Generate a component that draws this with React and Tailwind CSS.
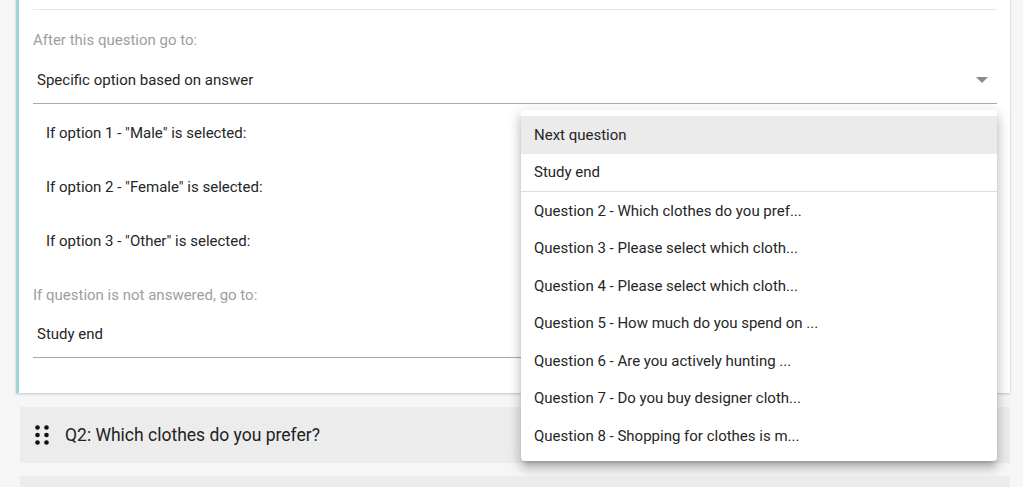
import React from "react";

const menuItems = [
  "Question 2 - Which clothes do you pref...",
  "Question 3 - Please select which cloth...",
  "Question 4 - Please select which cloth...",
  "Question 5 - How much do you spend on ...",
  "Question 6 - Are you actively hunting ...",
  "Question 7 - Do you buy designer cloth...",
  "Question 8 - Shopping for clothes is m...",
];

function DragDots() {
  return (
    <svg width="14" height="20" viewBox="0 0 14 20" className="shrink-0">
      {[2.5, 11.5].map((cx) =>
        [2.5, 10, 17.5].map((cy) => (
          <circle key={cx + "-" + cy} cx={cx} cy={cy} r="2.3" fill="#111" />
        ))
      )}
    </svg>
  );
}

export default function App() {
  return (
    <div className="relative w-[1023px] h-[487px] overflow-hidden bg-[#f6f6f6] font-['Roboto','Liberation_Sans',sans-serif] text-[#262626]">
      {/* Card */}
      <div className="ml-4 -mt-[10px] w-[994px] bg-white border-l-[3px] border-[#9fd5d5] shadow-[0_1px_3px_rgba(0,0,0,0.12),0_1px_2px_rgba(0,0,0,0.10)] pl-[14px] pr-[13px] pt-[19px] pb-[35px]">
        <div className="h-px bg-[#e6e6e6]" />
        <div className="mt-[22px] text-[15px] leading-4 text-[#9e9e9e]">After this question go to:</div>
        <div className="relative h-[56px] border-b border-[#ababab] flex items-end pb-[15px] pl-[4px]">
          <span className="text-[15px] leading-4">Specific option based on answer</span>
          <svg width="12" height="6" viewBox="0 0 12 6" className="absolute right-[9px] top-[29px]">
            <path d="M0 0 L12 0 L6 6 Z" fill="#8a8a8a" />
          </svg>
        </div>
        <div className="mt-[2px] pl-[13px]">
          <div className="h-[54px] flex items-center text-[15px]">If option 1 - "Male" is selected:</div>
          <div className="h-[54px] flex items-center text-[15px]">If option 2 - "Female" is selected:</div>
          <div className="h-[54px] flex items-center text-[15px]">If option 3 - "Other" is selected:</div>
        </div>
        <div className="mt-[19px] text-[15px] leading-4 text-[#9e9e9e]">If question is not answered, go to:</div>
        <div className="h-[55px] border-b border-[#ababab] flex items-end pb-[15px] pl-[4px]">
          <span className="text-[15px] leading-4">Study end</span>
        </div>
      </div>

      {/* Q2 bar */}
      <div className="relative ml-[20px] mt-[14px] w-[990px] h-[56px] bg-[#ececec] flex items-center pl-[15px] gap-[16px]">
        <DragDots />
        <span className="text-[17.5px] text-[#222]">Q2: Which clothes do you prefer?</span>
        <svg width="18" height="18" viewBox="0 0 24 24" className="absolute right-[10px] top-[19px]">
          <path d="M6 9l6 6 6-6" fill="none" stroke="#444" strokeWidth="2" />
        </svg>
      </div>
      <div className="ml-[20px] mt-[13px] w-[990px] h-[40px] bg-[#ececec]" />

      {/* Dropdown menu */}
      <div className="absolute left-[521px] top-[110px] w-[476px] rounded-[4px] bg-white py-[6px] shadow-[0_5px_5px_-3px_rgba(0,0,0,0.2),0_8px_10px_1px_rgba(0,0,0,0.14),0_3px_14px_2px_rgba(0,0,0,0.12)]">
        <div className="h-[37.5px] flex items-center px-[13px] bg-[#ebebeb] text-[15px]">Next question</div>
        <div className="h-[37.5px] flex items-center px-[13px] text-[15px]">Study end</div>
        <div className="h-px bg-[#dcdcdc]" />
        {menuItems.map((t) => (
          <div key={t} className="h-[37.5px] flex items-center px-[13px] text-[15px]">
            {t}
          </div>
        ))}
      </div>
    </div>
  );
}
